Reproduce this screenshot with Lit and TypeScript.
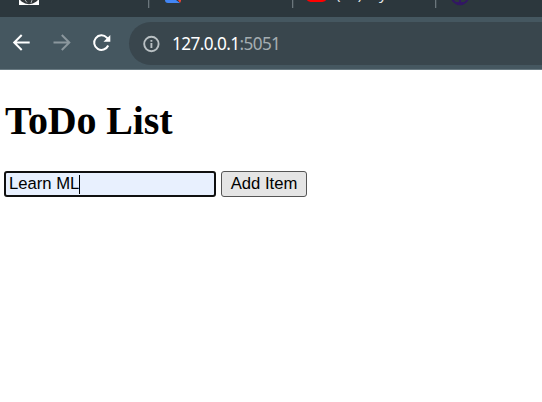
import { LitElement, html, css, svg } from "lit";
import { customElement, state } from "lit/decorators.js";

@customElement("browser-tabs")
class BrowserTabs extends LitElement {
  static styles = css`
    :host { display: block; height: 17px; background: #2c373d; overflow: hidden; }
    svg { display: block; }
    .title { font: 15px "Noto Sans", sans-serif; fill: #e4e8ea; }
  `;
  render() {
    return html`<svg width="542" height="17" viewBox="0 0 542 17">
      <rect x="19" y="0" width="20" height="5" fill="#fff" />
      <ellipse cx="29" cy="-4" rx="10" ry="8.3" fill="#303538" />
      <path d="M25 0L27 2.5M32 0L31 3" stroke="#aeb4b6" stroke-width="1" />
      <path d="M165 0H176L180 3H168Q165 3 165 0Z" fill="#4285f4" />
      <path d="M178 0H181V1L180 3Z" fill="#ea4335" />
      <path d="M307 0H326Q325 2 320 2H313Q308 2 307 0Z" fill="#f00" />
      <text class="title" x="336" y="-1">(11)</text>
      <text class="title" x="379" y="-1.5">y</text>
      <circle cx="460" cy="-4" r="8.3" fill="none" stroke="#321763" stroke-width="2" />
      <path d="M459 0H461V2H464V4H456V2H459Z" fill="#321763" />
      ${[148, 292, 435].map((x) => svg`<rect x=${x} y="0" width="1.3" height="8" fill="#6b767c" />`)}
    </svg>`;
  }
}

@customElement("browser-toolbar")
class BrowserToolbar extends LitElement {
  static styles = css`
    :host { display: flex; box-sizing: border-box; height: 53px; padding-top: 5px; background: #455760; border-bottom: 1px solid #697a82; overflow: hidden; }
    .nav { display: block; flex: none; width: 129px; height: 43px; }
    .address { display: flex; flex: 1; align-items: center; height: 43px; border-radius: 21.5px 0 0 21.5px; background: #39464d; }
    .info { flex: none; width: 18px; height: 18px; margin-left: 13px; }
    .url { margin-left: 12px; font: 17.2px/24px "Noto Sans", sans-serif; letter-spacing: -0.6px; color: #fff; white-space: nowrap; }
    .port { color: #a4adb1; }
  `;
  render() {
    return html`
      <svg class="nav" viewBox="0 22 129 43" fill="none" stroke-width="2">
        <path d="M29.7 42.5H14.5M21.7 35L14.2 42.5L21.7 50" stroke="#fff" />
        <path d="M53.5 42.5H69M61.8 35L69.3 42.5L61.8 50" stroke="#8b979d" />
        <path d="M108.2 45.5A7.3 7.3 0 1 1 106.8 37.6L108.5 39.5" stroke="#fff" />
        <path d="M110.3 35V41.8H103.5Z" fill="#fff" />
      </svg>
      <div class="address">
        <svg class="info" viewBox="0 0 18 18" fill="none" stroke="#b9c0c3" stroke-width="1.9">
          <circle cx="9.4" cy="9" r="7.2" />
          <path d="M9.4 8V13M9.4 5V6.8" />
        </svg>
        <span class="url">127.0.0.1<span class="port">:5051</span></span>
      </div>`;
  }
}

@customElement("app-root")
class AppRoot extends LitElement {
  static styles = css`
    :host { display: block; height: 402px; background: #fff; color: #000; overflow: hidden; }
    .page { padding: 28px 5px 0 4px; }
    h1 { margin: 0 0 27px 1px; font: bold 40px/46px "Liberation Serif", serif; letter-spacing: -0.12px; }
    .form { display: flex; gap: 5px; }
    .field, .add { box-sizing: border-box; height: 26px; font: 16.67px/20px "Liberation Sans", sans-serif; color: #000; }
    .field { display: flex; align-items: center; width: 212px; padding: 0 0 0 3px; border: 2px solid #101010; border-radius: 3px; background: #e8f0fe; }
    .caret { width: 1px; height: 19px; background: #000; }
    .add { width: 86px; padding: 0; border: 1px solid #555; border-radius: 3px; background: #e5e5e5; }
  `;
  @state() draft = "Learn ML";
  render() {
    return html`
      <browser-tabs></browser-tabs>
      <browser-toolbar></browser-toolbar>
      <main class="page">
        <h1>ToDo List</h1>
        <div class="form">
          <div class="field" role="textbox"><span>${this.draft}</span><span class="caret"></span></div>
          <button class="add">Add Item</button>
        </div>
      </main>`;
  }
}
